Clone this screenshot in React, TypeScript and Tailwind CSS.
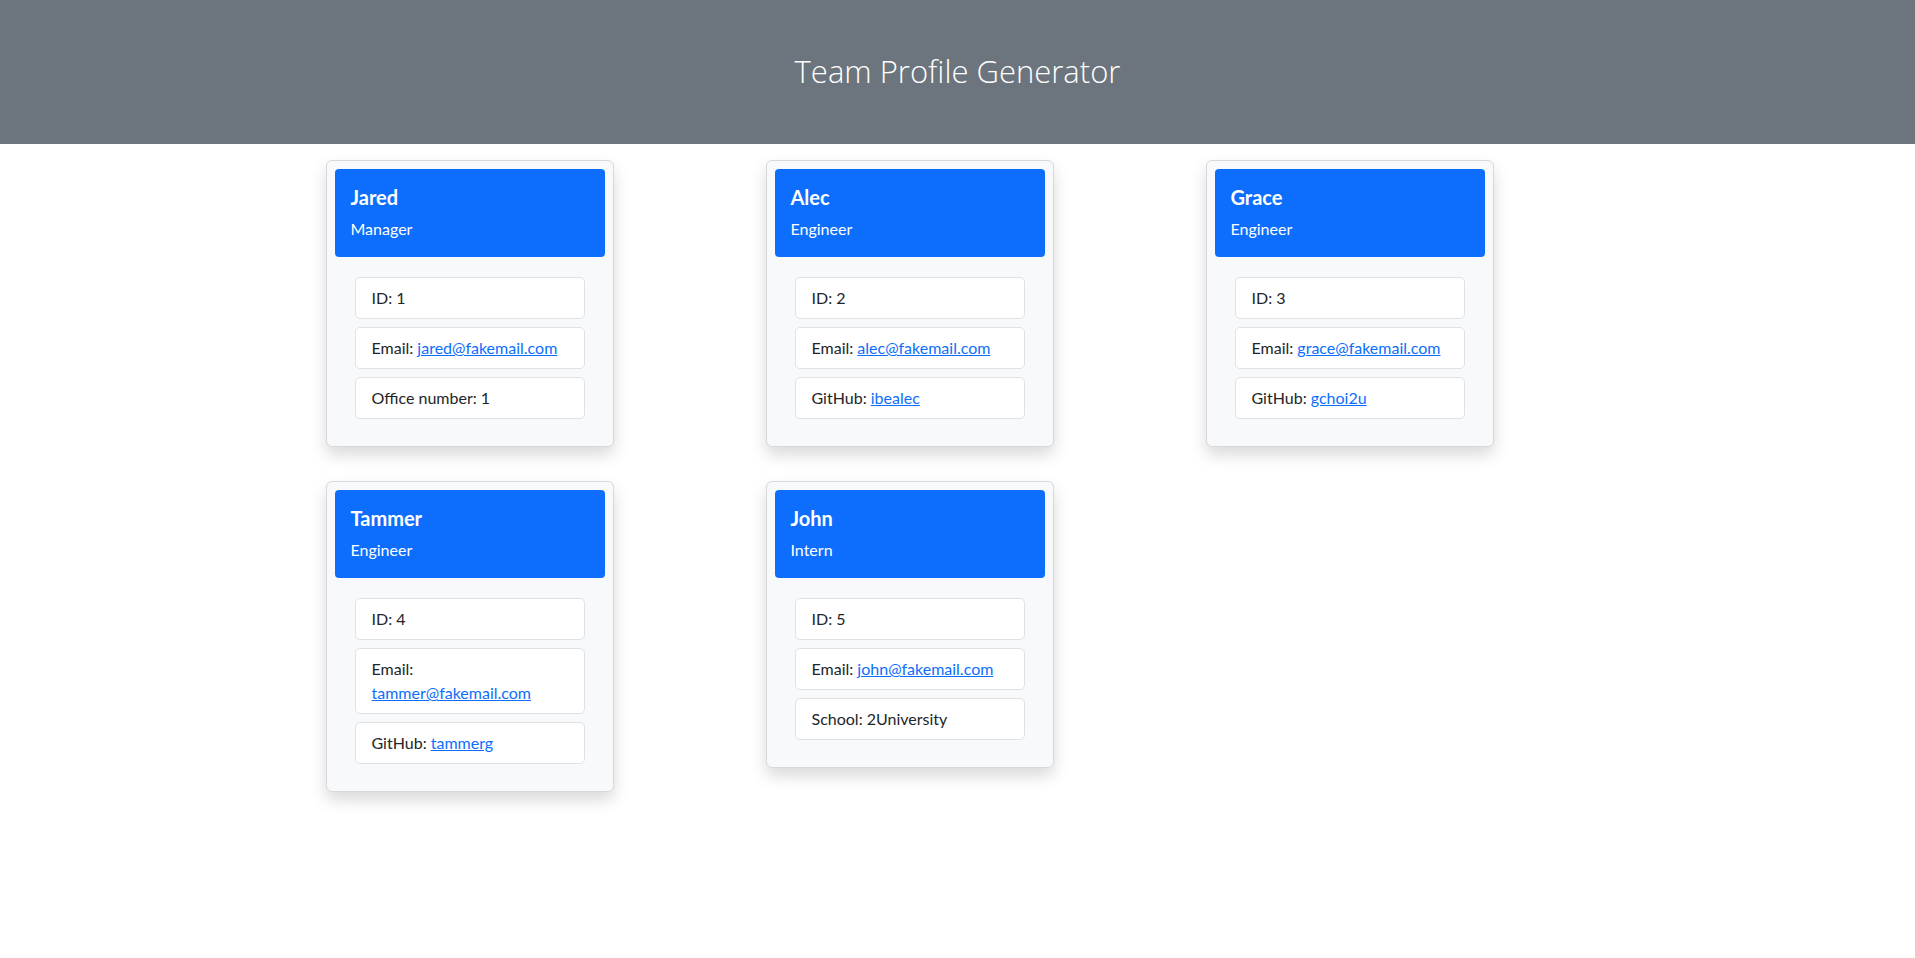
import React from "react";

type Member = {
  name: string;
  role: string;
  id: number;
  email: string;
  extraLabel: string;
  extraValue: string;
  extraLink?: boolean;
};

const members: Member[] = [
  { name: "Jared", role: "Manager", id: 1, email: "jared@fakemail.com", extraLabel: "Office number", extraValue: "1" },
  { name: "Alec", role: "Engineer", id: 2, email: "alec@fakemail.com", extraLabel: "GitHub", extraValue: "ibealec", extraLink: true },
  { name: "Grace", role: "Engineer", id: 3, email: "grace@fakemail.com", extraLabel: "GitHub", extraValue: "gchoi2u", extraLink: true },
  { name: "Tammer", role: "Engineer", id: 4, email: "tammer@fakemail.com", extraLabel: "GitHub", extraValue: "tammerg", extraLink: true },
  { name: "John", role: "Intern", id: 5, email: "john@fakemail.com", extraLabel: "School", extraValue: "2University" },
];

function Card({ m }: { m: Member }) {
  return (
    <div className="w-[288px] ml-[28px] border border-[#d6d8db] rounded-[6px] bg-[#f8f9fa] pt-2 px-2 pb-[27px] shadow-[0_8px_16px_rgba(0,0,0,0.15)]">
      <div className="bg-[#0d6efd] rounded-[4px] p-4 text-white">
        <h5 className="text-[20px] leading-[24px] font-bold mb-2">{m.name}</h5>
        <div className="text-[16px] leading-[24px]">{m.role}</div>
      </div>
      <ul className="mt-5 mx-5 flex flex-col gap-2">
        <li className="bg-white border border-[#dee2e6] rounded-[5px] px-4 py-2 leading-6">ID: {m.id}</li>
        <li className="bg-white border border-[#dee2e6] rounded-[5px] px-4 py-2 leading-6">
          Email:{" "}
          <a href="#" className="text-[#0d6efd] underline">{m.email}</a>
        </li>
        <li className="bg-white border border-[#dee2e6] rounded-[5px] px-4 py-2 leading-6">
          {m.extraLabel}:{" "}
          {m.extraLink ? (
            <a href="#" className="text-[#0d6efd] underline">{m.extraValue}</a>
          ) : (
            m.extraValue
          )}
        </li>
      </ul>
    </div>
  );
}

export default function App() {
  return (
    <div className="min-h-[958px] bg-white text-[#212529] text-[16px]" style={{ fontFamily: 'Lato, "Open Sans", sans-serif' }}>
      <header className="h-[144px] bg-[#6c757d] flex items-center justify-center">
        <h1 className="text-white text-[31px] font-light leading-[1.2]" style={{ fontFamily: '"Open Sans", sans-serif' }}>Team Profile Generator</h1>
      </header>
      <main className="w-[1320px] mx-auto pt-4 grid grid-cols-3 gap-y-[34px] items-start">
        {members.map((m) => (
          <div key={m.id}>
            <Card m={m} />
          </div>
        ))}
      </main>
    </div>
  );
}
